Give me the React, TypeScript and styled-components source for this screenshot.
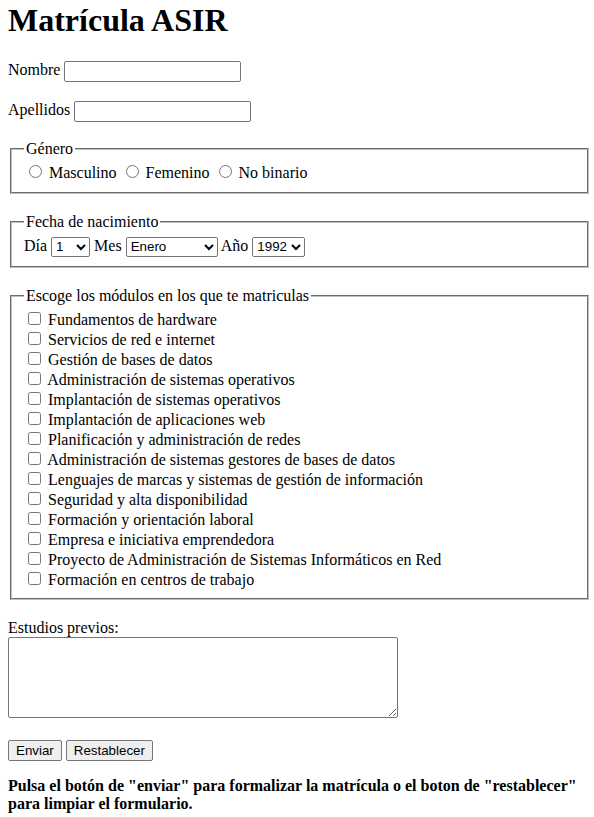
import React from 'react';
import styled, { createGlobalStyle } from 'styled-components';

const GlobalStyle = createGlobalStyle`
  body {
    margin: 0 3px 0 8px;
    font-family: "Liberation Serif", "Times New Roman", serif;
    font-size: 16px;
    color: #000;
    background: #fff;
  }
`;

const modules = [
  'Fundamentos de hardware',
  'Servicios de red e internet',
  'Gestión de bases de datos',
  'Administración de sistemas operativos',
  'Implantación de sistemas operativos',
  'Implantación de aplicaciones web',
  'Planificación y administración de redes',
  'Administración de sistemas gestores de bases de datos',
  'Lenguajes de marcas y sistemas de gestión de información',
  'Seguridad y alta disponibilidad',
  'Formación y orientación laboral',
  'Empresa e iniciativa emprendedora',
  'Proyecto de Administración de Sistemas Informáticos en Red',
  'Formación en centros de trabajo',
];

const months = [
  'Enero', 'Febrero', 'Marzo', 'Abril', 'Mayo', 'Junio',
  'Julio', 'Agosto', 'Septiembre', 'Octubre', 'Noviembre', 'Diciembre',
];

const days = Array.from({ length: 31 }, (_, i) => i + 1);
const years = Array.from({ length: 60 }, (_, i) => 1960 + i);

function App() {
  return (
    <>
      <GlobalStyle />
      <Form onSubmit={(e) => e.preventDefault()}>
        <Title>Matrícula ASIR</Title>
        <Row>
          <label>
            Nombre <TextInput type="text" name="nombre" />
          </label>
        </Row>
        <Row>
          <label>
            Apellidos <TextInput type="text" name="apellidos" />
          </label>
        </Row>

        <Fieldset>
          <Legend>Género</Legend>
          <label>
            <Radio type="radio" name="genero" value="m" /> Masculino
          </label>{' '}
          <label>
            <Radio type="radio" name="genero" value="f" /> Femenino
          </label>{' '}
          <label>
            <Radio type="radio" name="genero" value="nb" /> No binario
          </label>
        </Fieldset>

        <Fieldset>
          <Legend>Fecha de nacimiento</Legend>
          <DateRow>
            <label>
              Día{' '}
              <Select $width={39} defaultValue="1">
                {days.map((d) => (
                  <option key={d}>{d}</option>
                ))}
              </Select>
            </label>{' '}
            <label>
              Mes{' '}
              <Select $width={92} defaultValue="Enero">
                {months.map((m) => (
                  <option key={m}>{m}</option>
                ))}
              </Select>
            </label>{' '}
            <label>
              Año{' '}
              <Select $width={53} defaultValue="1992">
                {years.map((y) => (
                  <option key={y}>{y}</option>
                ))}
              </Select>
            </label>
          </DateRow>
        </Fieldset>

        <Fieldset>
          <Legend>Escoge los módulos en los que te matriculas</Legend>
          {modules.map((m) => (
            <ModuleItem key={m}>
              <Check type="checkbox" name="modulos" value={m} /> {m}
            </ModuleItem>
          ))}
        </Fieldset>

        <StudiesLabel htmlFor="estudios">Estudios previos:</StudiesLabel>
        <TextArea id="estudios" name="estudios" />

        <Buttons>
          <Button type="submit">Enviar</Button>
          <Button type="reset">Restablecer</Button>
        </Buttons>

        <Note>
          Pulsa el botón de "enviar" para formalizar la matrícula o el boton de
          "restablecer" para limpiar el formulario.
        </Note>
      </Form>
    </>
  );
}

export default App;

const Form = styled.form`
  display: block;
`;

const Title = styled.h1`
  margin: 2px 0 19px;
  font-size: 32px;
  font-weight: bold;
`;

const Row = styled.p`
  margin: 16px 0;
  line-height: 23px;
`;

const TextInput = styled.input`
  box-sizing: border-box;
  width: 177px;
  height: 21px;
  padding: 1px 2px;
  border: 1px solid #767676;
  border-radius: 2px;
  font: 13.33px "Liberation Sans", Arial, sans-serif;
  vertical-align: middle;
`;

const Fieldset = styled.fieldset`
  margin: 18px 2px 0;
  padding: 4.6px 12px 9px;
  border: 2px groove #c0c0c0;
  line-height: 20px;

  & + & {
    margin-top: 18.5px;
  }
`;

const Legend = styled.legend`
  padding: 0 2px;
  line-height: 18px;
`;

const Radio = styled.input`
  margin: 3px 3px 0 5px;
`;

const Check = styled.input`
  margin: 3px 3px 3px 4px;
`;

const DateRow = styled.div`
  line-height: 22px;
`;

const Select = styled.select<{ $width: number }>`
  box-sizing: border-box;
  width: ${(p) => p.$width}px;
  height: 20px;
  font: 13.33px "Liberation Sans", Arial, sans-serif;
  border: 1px solid #767676;
  border-radius: 2px;
  background: #fff;
`;

const ModuleItem = styled.label`
  display: block;
  height: 20px;
`;

const StudiesLabel = styled.label`
  display: block;
  margin-top: 18.5px;
  line-height: 18px;
`;

const TextArea = styled.textarea`
  display: block;
  box-sizing: border-box;
  width: 390px;
  height: 81px;
  margin: 0;
  padding: 2px;
  border: 1px solid #767676;
  border-radius: 2px;
  font: 13.33px "Liberation Mono", monospace;
`;

const Buttons = styled.div`
  display: flex;
  gap: 4px;
  margin-top: 22.5px;
`;

const Button = styled.button`
  box-sizing: border-box;
  height: 21px;
  padding: 1px 7px;
  border: 1px solid #767676;
  border-radius: 2px;
  background: #efefef;
  font: 13.33px "Liberation Sans", Arial, sans-serif;
  color: #000;
`;

const Note = styled.p`
  max-width: 578px;
  margin: 16px 0 0;
  font-weight: bold;
  line-height: 18px;
`;
